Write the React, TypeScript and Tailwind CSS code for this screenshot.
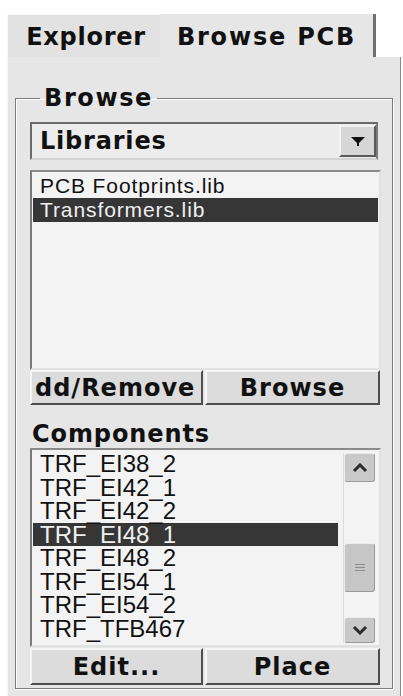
const boldText = "font-['DejaVu_Sans',sans-serif] font-bold text-[24px] leading-[28px] text-[#111]";
const plainText = "font-['Liberation_Sans',Arial,sans-serif]";

const libraries = ["PCB Footprints.lib", "Transformers.lib"];
const components = [
  "TRF_EI38_2",
  "TRF_EI42_1",
  "TRF_EI42_2",
  "TRF_EI48_1",
  "TRF_EI48_2",
  "TRF_EI54_1",
  "TRF_EI54_2",
  "TRF_TFB467",
];

function RaisedButton({ label, className = "" }: { label: string; className?: string }) {
  return (
    <div
      className={`flex items-center justify-center overflow-hidden bg-[#dcdcdc] border-2 border-t-[#f6f6f6] border-l-[#f6f6f6] border-r-[#4d4d4d] border-b-[#4d4d4d] tracking-[1px] ${boldText} ${className}`}
    >
      {label}
    </div>
  );
}

function ScrollArrow({ dir }: { dir: "up" | "down" }) {
  return (
    <svg width="16" height="10" viewBox="0 0 16 10">
      <polyline
        points={dir === "up" ? "2,8 8,2 14,8" : "2,2 8,8 14,2"}
        fill="none"
        stroke="#2a2a2a"
        strokeWidth="3"
      />
    </svg>
  );
}

function Scrollbar() {
  return (
    <div className="w-[32px] mr-[4px] mt-[1px] mb-[2px] flex flex-col border-l border-[#dadada]">
      <div className="h-[29px] bg-[#c9c9c9] rounded-[3px] border border-t-[#ececec] border-l-[#ececec] border-r-[#9a9a9a] border-b-[#9a9a9a] flex items-center justify-center">
        <ScrollArrow dir="up" />
      </div>
      <div className="h-[61px]" />
      <div className="h-[49px] bg-[#c6c6c6] rounded-[3px] border border-t-[#ececec] border-l-[#ececec] border-r-[#9a9a9a] border-b-[#9a9a9a] flex flex-col items-center justify-center gap-[2px]">
        <div className="w-[10px] h-[1px] bg-[#8c8c8c]" />
        <div className="w-[10px] h-[1px] bg-[#8c8c8c]" />
        <div className="w-[10px] h-[1px] bg-[#8c8c8c]" />
      </div>
      <div className="flex-1" />
      <div className="h-[26px] bg-[#c9c9c9] rounded-[3px] border border-t-[#ececec] border-l-[#ececec] border-r-[#9a9a9a] border-b-[#9a9a9a] flex items-center justify-center">
        <ScrollArrow dir="down" />
      </div>
    </div>
  );
}

export default function App() {
  return (
    <div className="w-[403px] h-[696px] bg-white pt-[14px] pl-[7px] pr-[2px] overflow-hidden">
      {/* Tabs */}
      <div className="flex h-[43px]">
        <div className={`w-[153px] bg-[#e2e2e2] border-t border-l border-[#f8f8f8] flex items-center justify-center pl-[4px] pt-[2px] tracking-[0.75px] ${boldText}`}>
          Explorer
        </div>
        <div className={`w-[216px] bg-[#e6e6e6] border-r-[3px] border-r-[#6f6f6f] flex items-center justify-center pt-[2px] tracking-[1.8px] ${boldText}`}>
          Browse PCB
        </div>
        <div className="flex-1 bg-white" />
      </div>

      {/* Panel body */}
      <div className="h-[639px] bg-[#e6e6e6] border-l border-[#f4f4f4] border-r border-r-[#8a8a8a] px-[7px] pt-[27px]">
        <fieldset className="border border-[#7c7c7c] shadow-[inset_1px_1px_0_#ffffff,1px_1px_0_#ffffff] pl-[14px] pr-[11px] pt-[10px] pb-[3px]">
          <legend className={`ml-[10px] px-[4px] tracking-[1.6px] ${boldText}`}>Browse</legend>

          {/* Dropdown */}
          <div className="h-[38px] mr-[3px] flex bg-[#ececec] border-2 border-t-[#6a6a6a] border-l-[#6a6a6a] border-r-[#7a7a7a] border-b-[#d2d2d2]">
            <div className={`flex-1 flex items-center pl-[8px] tracking-[0.8px] ${boldText}`}>Libraries</div>
            <div className="w-[37px] my-[1px] bg-[#d6d6d6] border-2 border-t-[#f2f2f2] border-l-[#f2f2f2] border-r-[#5a5a5a] border-b-[#5a5a5a] flex items-center justify-center">
              <svg width="16" height="11" viewBox="0 0 16 11">
                <polygon points="1,1 15,1 8,8" fill="#111" />
                <rect x="7" y="7" width="2" height="3" fill="#111" />
              </svg>
            </div>
          </div>

          {/* Library list */}
          <div className="mt-[10px] h-[200px] bg-[#f3f3f3] border-2 border-t-[#8a8a8a] border-l-[#7a7a7a] border-r-[#e2e2e2] border-b-[#e2e2e2] pt-[2px] px-[1px]">
            {libraries.map((lib, i) => (
              <div
                key={lib}
                className={`h-[24px] pl-[7px] text-[21px] leading-[24px] tracking-[0.9px] ${plainText} ${
                  i === 1 ? "bg-[#363636] text-[#f0f0f0]" : "text-[#111]"
                }`}
              >
                {lib}
              </div>
            ))}
          </div>

          <div className="flex gap-[2px] h-[35px]">
            <RaisedButton label="dd/Remove" className="w-[173px] justify-start pl-[3px]" />
            <RaisedButton label="Browse" className="w-[175px]" />
          </div>

          <div className={`mt-[15px] pl-[2px] tracking-[0.9px] ${boldText}`}>Components</div>

          {/* Components list */}
          <div className="h-[199px] flex bg-[#f3f3f3] border-2 border-t-[#8a8a8a] border-l-[#7a7a7a] border-r-[#e2e2e2] border-b-[#e2e2e2] pt-[2px]">
            <div className="w-[306px] pl-[1px]">
              {components.map((c, i) => (
                <div
                  key={c}
                  className={`h-[23.5px] pl-[7px] text-[24px] leading-[23.5px] ${plainText} ${
                    i === 3 ? "bg-[#363636] text-[#f0f0f0]" : "text-[#111]"
                  }`}
                >
                  {c}
                </div>
              ))}
            </div>
            <div className="flex-1" />
            <Scrollbar />
          </div>

          <div className="flex gap-[2px] h-[37px] mt-[1px]">
            <RaisedButton label="Edit..." className="w-[173px]" />
            <RaisedButton label="Place" className="w-[175px]" />
          </div>
        </fieldset>
      </div>
    </div>
  );
}
